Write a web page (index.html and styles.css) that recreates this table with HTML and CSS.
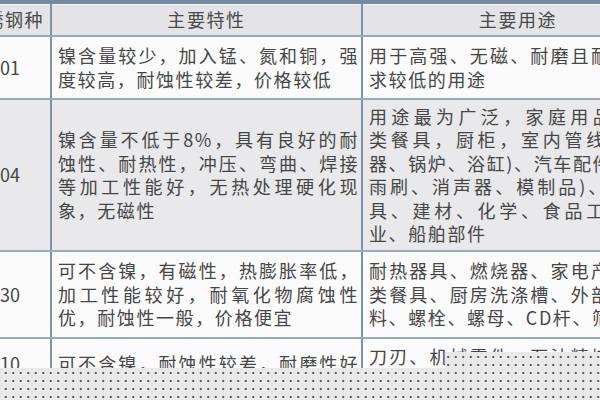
FILE: index.html
```html
<!DOCTYPE html>
<html lang="zh">
<head>
<meta charset="utf-8">
<link rel="stylesheet" href="styles.css">
</head>
<body>
<div class="frame">
  <table class="steel">
    <thead>
      <tr class="head">
        <th class="c1">不锈钢种</th>
        <th class="c2">主要特性</th>
        <th class="c3">主要用途</th>
      </tr>
    </thead>
    <tbody>
      <tr class="r1">
        <td class="c1">301</td>
        <td class="c2"><span class="ln">镍含量较少，加入锰、氮和铜，强</span>度较高，耐蚀性较差，价格较低</td>
        <td class="c3"><span class="ln">用于高强、无磁、耐磨且耐蚀性要</span>求较低的用途</td>
      </tr>
      <tr class="r2 alt">
        <td class="c1">304</td>
        <td class="c2"><span class="ln">镍含量不低于8%，具有良好的耐</span><span class="ln">蚀性、耐热性，冲压、弯曲、焊接</span><span class="ln">等加工性能好，无热处理硬化现</span>象，无磁性</td>
        <td class="c3"><span class="ln">用途最为广泛，家庭用品(1、2</span><span class="ln">类餐具，厨柜，室内管线、热水</span><span class="ln">器、锅炉、浴缸)、汽车配件（风挡</span><span class="ln">雨刷、消声器、模制品)、医疗器</span><span class="ln">具、建材、化学、食品工业、农</span>业、船舶部件</td>
      </tr>
      <tr class="r3">
        <td class="c1">430</td>
        <td class="c2"><span class="ln">可不含镍，有磁性，热膨胀率低，</span><span class="ln">加工性能较好，耐氧化物腐蚀性</span>优，耐蚀性一般，价格便宜</td>
        <td class="c3"><span class="ln">耐热器具、燃烧器、家电产品、２</span><span class="ln">类餐具、厨房洗涤槽、外部装饰材</span>料、螺栓、螺母、CD杆、筛网等</td>
      </tr>
      <tr class="r4">
        <td class="c1">410</td>
        <td class="c2"><span class="ln">可不含镍，耐蚀性较差，耐磨性好</span>，硬度高</td>
        <td class="c3"><span class="ln">刀刃、机械零件、石油精炼装置、</span><span class="ln">螺栓、螺母、泵杆、餐具等日用</span>器具</td>
      </tr>
    </tbody>
  </table>
  <div class="placeholder"></div>
</div>
</body>
</html>
```

FILE: styles.css
```css
html, body {
  margin: 0;
  padding: 0;
  background: #fbfbfb;
}

.frame {
  position: relative;
  width: 600px;
  height: 400px;
  overflow: hidden;
}

.steel {
  margin-left: -40px;
  border-collapse: collapse;
  table-layout: fixed;
  width: 709px;
  border-top: 4px solid #7489a3;
  font-family: "Noto Sans CJK SC", "Noto Sans", sans-serif;
  font-size: 18px;
  letter-spacing: 1.6px;
  color: #464646;
  white-space: nowrap;
}

.steel th,
.steel td {
  padding: 0 2px 0 6px;
  border-left: 2px solid #7c92ab;
  border-bottom: 2px solid #9aa8b8;
  line-height: 23.5px;
  vertical-align: middle;
  text-align: left;
}

.ln {
  display: block;
  text-align: justify;
  text-align-last: justify;
}

.steel .c1 {
  width: 90px;
  padding: 0;
  text-align: center;
  border-left: none;
  letter-spacing: 0;
}

.steel .c2 { width: 309px; }
.steel .c3 { width: 310px; }

.head th {
  height: 31px;
  font-weight: normal;
  text-align: center;
  padding: 0;
  background: #e4e4e6;
  color: #4a4a4a;
  box-shadow: inset 0 1px 0 #f4f4f4;
}

.head th.c1 {
  letter-spacing: 1.6px;
  padding: 0;
}

.r1 td { height: 61px; background: #fbfbfb; }
.r2 td { height: 150px; }
.r3 td { height: 85px; background: #fbfbfb; }
.r4 td {
  vertical-align: top;
  padding-top: 6px;
  background: #fbfbfb;
}
.r4 td.c2 { padding-top: 13px; }
.r4 td.c1 { padding-top: 13px; }

.alt td { background: #e9e9eb; }

.placeholder {
  position: absolute;
  left: 0;
  right: 0;
  bottom: 0;
  height: 48px;
  background-color: #e8e8e8;
  background-image: radial-gradient(circle, #555 0.9px, transparent 1.3px);
  background-size: 7.5px 8px;
  background-position: 2px 1px;
  clip-path: polygon(0 16px, 445px 16px, 445px 0, 100% 0, 100% 100%, 0 100%);
}
```
